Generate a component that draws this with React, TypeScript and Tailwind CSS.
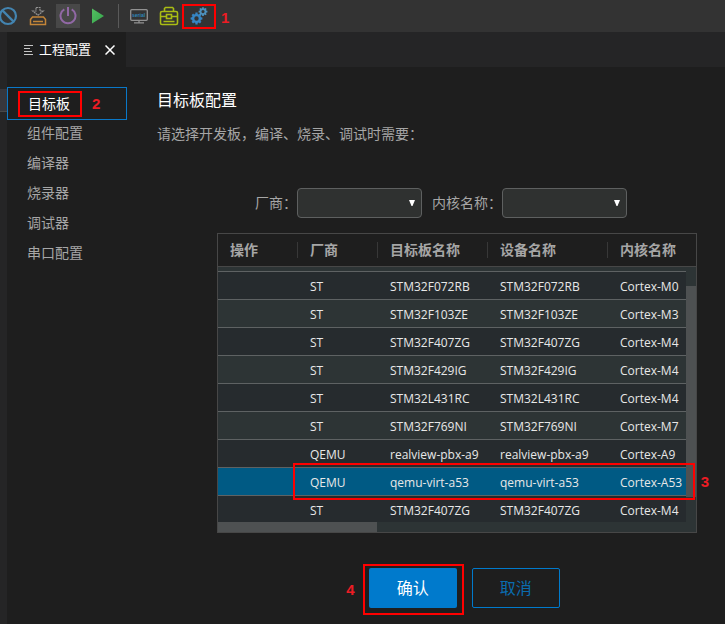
import type { ReactNode } from "react";

const boards = [
  ["ST", "STM32F072RB", "STM32F072RB", "Cortex-M0"],
  ["ST", "STM32F103ZE", "STM32F103ZE", "Cortex-M3"],
  ["ST", "STM32F407ZG", "STM32F407ZG", "Cortex-M4"],
  ["ST", "STM32F429IG", "STM32F429IG", "Cortex-M4"],
  ["ST", "STM32L431RC", "STM32L431RC", "Cortex-M4"],
  ["ST", "STM32F769NI", "STM32F769NI", "Cortex-M7"],
  ["QEMU", "realview-pbx-a9", "realview-pbx-a9", "Cortex-A9"],
  ["QEMU", "qemu-virt-a53", "qemu-virt-a53", "Cortex-A53"],
  ["ST", "STM32F407ZG", "STM32F407ZG", "Cortex-M4"],
];
const selectedBoard = 7;

const columns = ["操作", "厂商", "目标板名称", "设备名称", "内核名称"];
const sections = ["组件配置", "编译器", "烧录器", "调试器", "串口配置"];

function Step({ n, className = "" }: { n: number; className?: string }) {
  return (
    <span className={className}>
      <b className="block [font-family:'Liberation_Sans',Arial,sans-serif] text-[15px] leading-5 font-bold text-[#ed1c24]">{n}</b>
    </span>
  );
}

function ToolButton({ label, active, children }: { label: string; active?: boolean; children: ReactNode }) {
  return (
    <button
      type="button"
      aria-label={label}
      className={`flex size-6 shrink-0 items-center justify-center ${active ? "bg-[#484848]" : ""}`}
    >
      {children}
    </button>
  );
}

function gearPath(cx: number, cy: number, r: number, hole: number, teeth: number) {
  const pts: string[] = [];
  const step = (Math.PI * 2) / teeth;
  for (let i = 0; i < teeth; i++) {
    const a = i * step;
    const inner = r * 0.78;
    for (const [rad, off] of [[inner, -0.32], [r, -0.24], [r, 0.24], [inner, 0.32]]) {
      pts.push(`${(cx + rad * Math.cos(a + off * step)).toFixed(2)} ${(cy + rad * Math.sin(a + off * step)).toFixed(2)}`);
    }
  }
  return `M${pts.join("L")}ZM${cx - hole} ${cy}a${hole} ${hole} 0 1 0 ${hole * 2} 0a${hole} ${hole} 0 1 0 ${-hole * 2} 0Z`;
}

function Toolbar() {
  return (
    <header className="flex h-8 items-center overflow-hidden bg-[#333333]">
      <div className="-ml-1 flex items-center gap-[6px]">
        <ToolButton label="清理">
          <svg width="20" height="20" viewBox="0 0 20 20" fill="none" stroke="#4384b0" strokeWidth="2.2">
            <circle cx="10" cy="10" r="8" />
            <path d="M4.4 4.4l11.2 11.2" />
          </svg>
        </ToolButton>
        <ToolButton label="下载">
          <svg width="20" height="20" viewBox="0 0 20 20" fill="none">
            <path d="M8 1.5h4v3.500h3.200L10 9.300 4.800 5H8z" stroke="#929292" strokeWidth="1.200" strokeDasharray="2 .6" />
            <path d="M4.500 11h11l2 2.500v5h-15v-5z" stroke="#c38538" strokeWidth="1.500" />
            <path d="M5 15.500h10" stroke="#c38538" strokeWidth="1.500" />
          </svg>
        </ToolButton>
        <ToolButton label="电源" active>
          <svg width="18" height="18" viewBox="0 0 18 18" fill="none" stroke="#9168a5" strokeWidth="2">
            <path d="M5.300 2.300a7.500 7.500 0 1 0 7.400 0M9 0v9" />
          </svg>
        </ToolButton>
        <ToolButton label="运行">
          <svg width="14" height="16" viewBox="0 0 14 16">
            <defs>
              <linearGradient id="run" x1="0" x2="1" y1="0" y2="1">
                <stop offset="0" stopColor="#54be62" />
                <stop offset="1" stopColor="#35a64b" />
              </linearGradient>
            </defs>
            <path d="M1 .5L13 8 1 15.500z" fill="url(#run)" />
          </svg>
        </ToolButton>
      </div>
      <div className="ml-2 h-6 w-px bg-[#5a5a5a]" />
      <div className="ml-2 flex items-center gap-[6px]">
        <ToolButton label="串口">
          <svg width="18" height="16" viewBox="0 0 18 16" fill="none">
            <rect x=".7" y="1.700" width="16.600" height="10.600" rx="1" stroke="#929292" strokeWidth="1.300" />
            <path d="M9 12.500v2M4 14.800h10" stroke="#929292" strokeWidth="1.300" />
            <text x="2" y="9" fontSize="5" fontWeight="700" fontFamily="Liberation Sans, sans-serif" fill="#2e86b8">serial</text>
          </svg>
        </ToolButton>
        <ToolButton label="工具箱">
          <svg width="20" height="20" viewBox="0 0 20 20" fill="none" stroke="#aabd14" strokeWidth="1.600">
            <rect x="1.500" y="5.500" width="17" height="13" rx="1.500" />
            <path d="M5.500 5.500v-3l1-1h7l1 1v3M1.500 10.500h6M12.500 10.500h6M4.500 15.500h11" />
            <rect x="7.500" y="8.500" width="5" height="4" />
          </svg>
        </ToolButton>
      </div>
      <div className="ml-px flex h-[25px] w-[34px] items-center justify-center border-2 border-[#ff0000]">
        <ToolButton label="工程配置">
          <svg width="18" height="18" viewBox="0 0 18 18" fillRule="evenodd">
            <path d={gearPath(6.5, 11.5, 6, 2.2, 8)} fill="#3585c3" />
            <path d={gearPath(13, 4.6, 4.5, 1.6, 8)} fill="#4d91bd" />
          </svg>
        </ToolButton>
      </div>
      <Step n={1} className="ml-[5px] pt-1" />
    </header>
  );
}

function Filter({ id, label }: { id: string; label: string }) {
  return (
    <div className="flex items-center">
      <label htmlFor={id} className="text-sm">{label}</label>
      <div className="relative">
        <select
          id={id}
          className="block h-[30px] w-[125px] appearance-none rounded-[4px] border border-[#5e6060] bg-[#2f3130] px-2 text-sm"
        >
          <option value=""></option>
        </select>
        <svg className="pointer-events-none absolute top-[11px] right-[7px]" width="6" height="8" viewBox="0 0 6 8">
          <path d="M0 1h6L3.500 7h-1z" fill="#ffffff" />
        </svg>
      </div>
    </div>
  );
}

function BoardTable() {
  return (
    <div className="relative mr-7 ml-[60px] h-[300px] overflow-hidden border border-[#474747]">
      <table className="w-full table-fixed border-separate border-spacing-0 text-left">
        <colgroup>
          <col className="w-20" />
          <col className="w-20" />
          <col className="w-[110px]" />
          <col className="w-[120px]" />
          <col />
        </colgroup>
        <thead>
          <tr>
            {columns.map((name) => (
              <th key={name} className="group h-[33px] border-b border-[#474747] p-0 text-sm font-bold">
                <div className="h-4 border-r border-[#383838] pl-3 leading-4 group-last:border-r-0">{name}</div>
              </th>
            ))}
          </tr>
        </thead>
        <tbody className="text-xs text-[#e8e8e8]">
          <tr aria-hidden="true">
            <td colSpan={5} className="h-[5px] border-b border-[#5e6263] bg-[#2d3435] p-0" />
          </tr>
          {boards.map((board, i) => (
            <tr
              key={i}
              className={i === selectedBoard ? "bg-[#005a84]" : i % 2 ? "bg-[#2d3435]" : "bg-[#262b2e]"}
            >
              <td className="h-7 border-b border-[#5e6263] p-0" />
              {board.map((value, j) => (
                <td key={j} className="h-7 border-b border-[#5e6263] p-0 pt-0.5 pl-3 whitespace-nowrap">{value}</td>
              ))}
            </tr>
          ))}
        </tbody>
      </table>
      <div className="absolute top-[33px] right-0 bottom-0 w-[10px] bg-[#2d3435] pt-[19px]">
        <div className="h-[211px] bg-[#4e5152]" />
      </div>
      <div className="absolute right-0 bottom-0 left-0 h-[10px] bg-[#2d3435]">
        <div className="h-full w-1/3 bg-[#4e5152]" />
      </div>
      <div className="pointer-events-none absolute top-[229px] right-px left-[75px] h-[37px] border-2 border-[#ff0000]" />
    </div>
  );
}

export default function App() {
  return (
    <div className="flex min-h-screen flex-col bg-[#1e1e1e] [font-family:'Open_Sans','Noto_Sans_CJK_SC',sans-serif] text-[#a6a6a6]">
      <Toolbar />
      <div className="flex flex-1">
        <aside className="w-[7px] shrink-0 bg-[#252526] pt-[57px]">
          <div className="h-[23px] border-b border-[#484848] bg-[#37373d]" />
        </aside>
        <div className="flex min-w-0 flex-1 flex-col">
          <div className="flex h-[35px] bg-[#252526]">
            <div className="flex w-[119px] items-center bg-[#1e1e1e] pl-[17px] text-white">
              <svg width="10" height="11" viewBox="0 0 10 11" stroke="#c5c5c5" strokeWidth="1">
                <path d="M0 1.500h9M0 4.500h6M0 7.500h8M0 10.500h9" />
              </svg>
              <span className="ml-[5px] text-[13px]">工程配置</span>
              <button type="button" aria-label="关闭" className="ml-[14px]">
                <svg width="10" height="10" viewBox="0 0 10 10" stroke="#ffffff" strokeWidth="1.500">
                  <path d="M.5.500l9 9M9.500.500l-9 9" />
                </svg>
              </button>
            </div>
          </div>
          <div className="flex flex-1 pt-5">
            <nav className="w-[120px] shrink-0 text-sm">
              <a href="#board" className="flex h-[33px] items-center border border-[#0a78c8] pl-[10px] text-white">
                <span className="flex h-[26px] w-16 items-center border-2 border-[#ff0000] pl-2">目标板</span>
                <Step n={2} className="ml-[10px]" />
              </a>
              <div className="-mt-0.5">
                {sections.map((name, i) => (
                  <a key={name} href={`#section-${i}`} className="flex h-[30px] items-center pl-5">
                    {name}
                  </a>
                ))}
              </div>
            </nav>
            <main className="min-w-0 flex-1 pl-[30px]">
              <h1 className="mt-px text-base leading-6 text-white">目标板配置</h1>
              <p className="mt-3 text-sm leading-5">请选择开发板，编译、烧录、调试时需要：</p>
              <div className="mt-11 flex justify-center gap-[10px]">
                <Filter id="vendor" label="厂商：" />
                <Filter id="core" label="内核名称：" />
              </div>
              <div className="relative mt-[15px]">
                <BoardTable />
                <Step n={3} className="absolute right-4 top-[239px]" />
              </div>
              <div className="mt-[31px] flex items-center justify-center pb-[9px] pl-7">
                <Step n={4} className="mr-2" />
                <div className="border-2 border-[#ff0000] pt-[2px] pr-[5px] pb-[5px] pl-1">
                  <button type="button" className="block h-10 w-[88px] rounded-[2px] bg-[#007acc] text-base text-white">确认</button>
                </div>
                <button type="button" className="mr-1 mb-[3px] ml-2 h-10 w-[88px] rounded-[2px] border border-[#007acc] text-base text-[#0a6cb0]">取消</button>
              </div>
            </main>
          </div>
        </div>
      </div>
    </div>
  );
}
